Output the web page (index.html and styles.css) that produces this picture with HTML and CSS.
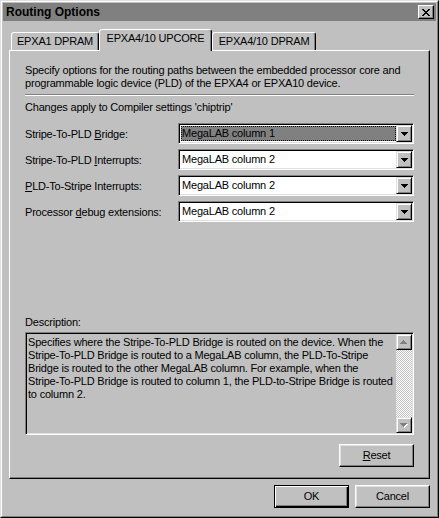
FILE: index.html
```html
<!DOCTYPE html>
<html>
<head>
<meta charset="utf-8">
<title>Routing Options</title>
<link rel="stylesheet" href="styles.css">
</head>
<body>
<div class="window">
  <div class="frame">
    <div class="titlebar">
      <span class="title">Routing Options</span>
      <div class="close">
        <svg width="8" height="7" viewBox="0 0 8 7" shape-rendering="crispEdges"><path d="M0 0h2v1h-2zM6 0h2v1h-2zM1 1h2v1h-2zM5 1h2v1h-2zM2 2h4v1h-4zM3 3h2v1h-2zM2 4h4v1h-4zM1 5h2v1h-2zM5 5h2v1h-2zM0 6h2v1h-2zM6 6h2v1h-2z" fill="#000"/></svg>
      </div>
    </div>
    <div class="main">
      <div class="tabs">
        <div class="tab t1">EPXA1 DPRAM</div>
        <div class="tab t2 active">EPXA4/10 UPCORE</div>
        <div class="tab t3">EPXA4/10 DPRAM</div>
      </div>
      <div class="panel">
        <p class="intro">Specify options for the routing paths between the embedded processor core and<br>programmable logic device (PLD) of the EPXA4 or EPXA10 device.</p>
        <div class="sep"></div>
        <p class="note">Changes apply to Compiler settings 'chiptrip'</p>
        <div class="rows">
          <div class="row">
            <span class="label">Stripe-To-PLD <u>B</u>ridge:</span>
            <div class="combo focused">
              <span class="value"><span class="hl">MegaLAB column 1</span></span>
              <span class="drop"><svg width="7" height="4" viewBox="0 0 7 4" shape-rendering="crispEdges"><path d="M0 0h7v1h-1v1h-1v1h-1v1h-1v-1h-1v-1h-1v-1h-1z" fill="#000"/></svg></span>
            </div>
          </div>
          <div class="row">
            <span class="label">Stripe-To-PLD <u>I</u>nterrupts:</span>
            <div class="combo">
              <span class="value"><span class="hl">MegaLAB column 2</span></span>
              <span class="drop"><svg width="7" height="4" viewBox="0 0 7 4" shape-rendering="crispEdges"><path d="M0 0h7v1h-1v1h-1v1h-1v1h-1v-1h-1v-1h-1v-1h-1z" fill="#000"/></svg></span>
            </div>
          </div>
          <div class="row">
            <span class="label"><u>P</u>LD-To-Stripe Interrupts:</span>
            <div class="combo">
              <span class="value"><span class="hl">MegaLAB column 2</span></span>
              <span class="drop"><svg width="7" height="4" viewBox="0 0 7 4" shape-rendering="crispEdges"><path d="M0 0h7v1h-1v1h-1v1h-1v1h-1v-1h-1v-1h-1v-1h-1z" fill="#000"/></svg></span>
            </div>
          </div>
          <div class="row">
            <span class="label">Processor <u>d</u>ebug extensions:</span>
            <div class="combo">
              <span class="value"><span class="hl">MegaLAB column 2</span></span>
              <span class="drop"><svg width="7" height="4" viewBox="0 0 7 4" shape-rendering="crispEdges"><path d="M0 0h7v1h-1v1h-1v1h-1v1h-1v-1h-1v-1h-1v-1h-1z" fill="#000"/></svg></span>
            </div>
          </div>
        </div>
        <div class="desc-group">
          <p class="desc-label">Description:</p>
          <div class="desc">
            <div class="desc-text">Specifies where the Stripe-To-PLD Bridge is routed on the device. When the<br>Stripe-To-PLD Bridge is routed to a MegaLAB column, the PLD-To-Stripe<br>Bridge is routed to the other MegaLAB column. For example, when the<br>Stripe-To-PLD Bridge is routed to column 1, the PLD-to-Stripe Bridge is routed<br>to column 2.</div>
            <div class="scroll">
              <div class="sbtn"><svg width="8" height="5" viewBox="0 0 8 5" shape-rendering="crispEdges"><path d="M4 1h1v1h1v1h1v1h-7v-1h1v-1h1v-1h1z" fill="#fff"/><path d="M3 0h1v1h1v1h1v1h1v1h-7v-1h1v-1h1v-1h1z" fill="#808080"/></svg></div>
              <div class="track"></div>
              <div class="sbtn"><svg width="8" height="5" viewBox="0 0 8 5" shape-rendering="crispEdges"><path d="M1 1h7v1h-1v1h-1v1h-1v1h-1v-1h-1v-1h-1v-1h-1z" fill="#fff"/><path d="M0 0h7v1h-1v1h-1v1h-1v1h-1v-1h-1v-1h-1v-1h-1z" fill="#808080"/></svg></div>
            </div>
          </div>
          <div class="reset-row">
            <div class="btn"><u>R</u>eset</div>
          </div>
        </div>
      </div>
      <div class="buttons">
        <div class="btn default">OK</div>
        <div class="btn">Cancel</div>
      </div>
    </div>
  </div>
</div>
</body>
</html>
```

FILE: styles.css
```css
* { box-sizing: border-box; }

html, body {
  margin: 0;
  padding: 0;
  background: #c0c0c0;
}

body {
  font-family: "Liberation Sans", Arial, sans-serif;
  font-size: 11px;
  letter-spacing: -0.2px;
  color: #000;
}

p { margin: 0; }

.window {
  width: 439px;
  height: 518px;
  border: 1px solid;
  border-color: #dfdfdf #000 #000 #dfdfdf;
  background: #c0c0c0;
}

.frame {
  height: 100%;
  border: 1px solid;
  border-color: #fff #808080 #808080 #fff;
  padding: 1px;
  display: flex;
  flex-direction: column;
}

.titlebar {
  height: 18px;
  background: #808080;
  display: flex;
  align-items: center;
  justify-content: space-between;
  padding: 0 2px 0 3px;
}

.title {
  font-weight: bold;
  font-size: 12px;
  letter-spacing: 0;
  color: #000;
}

.close {
  width: 16px;
  height: 14px;
  border: 1px solid;
  border-color: #fff #000 #000 #fff;
  box-shadow: inset -1px -1px #808080;
  background: #c0c0c0;
  display: flex;
  align-items: center;
  justify-content: center;
  padding-right: 1px;
}

.close svg { display: block; }

.main {
  flex: 1;
  padding: 8px 6px 0 6px;
  display: flex;
  flex-direction: column;
}

.tabs {
  height: 21px;
  display: flex;
  align-items: flex-end;
  padding-left: 2px;
}

.tab {
  height: 18px;
  border: 1px solid;
  border-bottom: none;
  border-color: #fff #000 transparent #fff;
  border-radius: 3px 3px 0 0;
  box-shadow: inset -1px 0 #808080;
  text-align: center;
  line-height: 16px;
  white-space: nowrap;
  background: #c0c0c0;
}

.t1 { width: 88px; }
.t2 { width: 113px; }
.t3 { width: 104px; }

.tab.active {
  height: 22px;
  margin-bottom: -1px;
  position: relative;
  z-index: 1;
}

.panel {
  height: 429px;
  border: 1px solid;
  border-color: #fff #000 #000 #fff;
  box-shadow: inset -1px -1px #808080;
  padding: 13px 15px 11px 15px;
  display: flex;
  flex-direction: column;
}

.intro, .note, .desc-label {
  line-height: 13px;
  white-space: nowrap;
}

.sep {
  margin-top: 4px;
  height: 2px;
  border-top: 1px solid #808080;
  border-bottom: 1px solid #fff;
}

.note { margin-top: 5px; }

.rows {
  margin-top: 9px;
  display: flex;
  flex-direction: column;
  gap: 5px;
}

.row {
  height: 21px;
  display: flex;
  align-items: center;
}

.label {
  width: 153px;
  flex: none;
  white-space: nowrap;
}

.combo {
  flex: 1;
  height: 21px;
  border: 1px solid;
  border-color: #808080 #fff #fff #808080;
  box-shadow: inset 1px 1px #000, inset -1px -1px #dfdfdf;
  background: #fff;
  padding: 1px;
  display: flex;
}

.value {
  flex: 1;
  display: flex;
  padding: 1px;
}

.hl {
  flex: 1;
  line-height: 15px;
  padding-left: 1px;
  white-space: nowrap;
}

.combo.focused .value { padding: 1px 0 1px 1px; }

.combo.focused .hl {
  background: #808080;
  outline: 1px dotted #000;
  outline-offset: -1px;
  padding-left: 1px;
  padding-right: 1px;
}

.drop {
  width: 16px;
  height: 17px;
  flex: none;
  border: 1px solid;
  border-color: #dfdfdf #000 #000 #dfdfdf;
  box-shadow: inset 1px 1px #fff, inset -1px -1px #808080;
  background: #c0c0c0;
  display: flex;
  align-items: center;
  justify-content: center;
}

.drop svg, .sbtn svg { display: block; }

.desc-group {
  margin-top: auto;
  display: flex;
  flex-direction: column;
}

.desc {
  margin-top: 3px;
  height: 103px;
  border: 1px solid;
  border-color: #808080 #fff #fff #808080;
  box-shadow: inset 1px 1px #000, inset -1px -1px #dfdfdf;
  padding: 1px;
  display: flex;
}

.desc-text {
  flex: 1;
  padding: 2px 0 0 1px;
  line-height: 13px;
  white-space: nowrap;
  overflow: hidden;
}

.scroll {
  width: 16px;
  flex: none;
  display: flex;
  flex-direction: column;
}

.sbtn {
  width: 16px;
  height: 16px;
  flex: none;
  border: 1px solid;
  border-color: #dfdfdf #000 #000 #dfdfdf;
  box-shadow: inset 1px 1px #fff, inset -1px -1px #808080;
  background: #c0c0c0;
  display: flex;
  align-items: center;
  justify-content: center;
}

.track {
  flex: 1;
  background: repeating-conic-gradient(#fff 0 25%, #c0c0c0 0 50%) 0 0 / 2px 2px;
}

.reset-row {
  margin-top: 9px;
  display: flex;
  justify-content: flex-end;
}

.btn {
  width: 75px;
  height: 23px;
  border: 1px solid;
  border-color: #fff #000 #000 #fff;
  box-shadow: inset -1px -1px #808080, inset 1px 1px #dfdfdf;
  background: #c0c0c0;
  display: flex;
  align-items: center;
  justify-content: center;
  line-height: 13px;
}

.btn.default {
  border-color: #000;
  box-shadow: inset 1px 1px #fff, inset -1px -1px #000, inset -2px -2px #808080;
}

.buttons {
  margin-top: 6px;
  display: flex;
  justify-content: flex-end;
  gap: 6px;
}
```
